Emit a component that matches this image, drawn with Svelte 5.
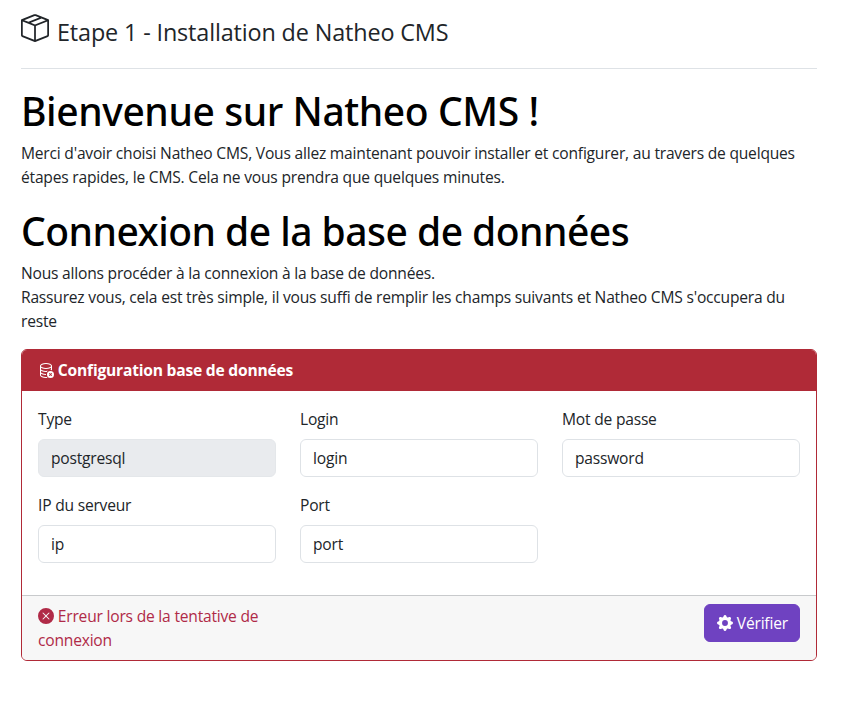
<script>
  const fields = [
    { id: 'type', label: 'Type', value: 'postgresql', disabled: true },
    { id: 'login', label: 'Login', value: 'login' },
    { id: 'password', label: 'Mot de passe', value: 'password' },
    { id: 'ip', label: 'IP du serveur', value: 'ip' },
    { id: 'port', label: 'Port', value: 'port' },
  ];
</script>

<main>
  <header class="title">
    <svg class="box" viewBox="0 0 16 16" fill="currentColor"><path d="M8.186 1.113a.5.5 0 0 0-.372 0L1.846 3.5l2.404.961L10.404 2zm3.564 1.426L5.596 5 8 5.961 14.154 3.5zm3.25 1.7-6.5 2.6v7.922l6.5-2.6V4.24zM7.5 14.762V6.838L1 4.239v7.923zM7.443.184a1.5 1.5 0 0 1 1.114 0l7.129 2.852A.5.5 0 0 1 16 3.5v8.662a1 1 0 0 1-.629.928l-7.185 2.874a.5.5 0 0 1-.372 0L.63 13.09a1 1 0 0 1-.63-.928V3.5a.5.5 0 0 1 .314-.464z" /></svg>
    <span>Etape 1 - Installation de Natheo CMS</span>
  </header>

  <h1>Bienvenue sur Natheo CMS !</h1>
  <p>Merci d'avoir choisi Natheo CMS, Vous allez maintenant pouvoir installer et configurer, au travers de quelques<br />étapes rapides, le CMS. Cela ne vous prendra que quelques minutes.</p>

  <h1 class="tight">Connexion de la base de données</h1>
  <p>Nous allons procéder à la connexion à la base de données.<br />Rassurez vous, cela est très simple, il vous suffi de remplir les champs suivants et Natheo CMS s'occupera du<br />reste</p>

  <section class="card">
    <div class="card-header">
      <svg viewBox="0 0 16 16" fill="currentColor"><path d="M12.096 6.223A5 5 0 0 0 13 5.698V7c0 .289-.213.654-.753 1.007a4.5 4.5 0 0 1 1.753.25V4c0-1.007-.875-1.755-1.904-2.223C11.022 1.289 9.573 1 8 1s-3.022.289-4.096.777C2.875 2.245 2 2.993 2 4v9c0 1.007.875 1.755 1.904 2.223C4.978 15.71 6.427 16 8 16c.536 0 1.058-.034 1.555-.097a4.5 4.5 0 0 1-.813-.927Q8.378 15 8 15c-1.464 0-2.766-.27-3.682-.687C3.356 13.875 3 13.373 3 13v-1.302c.271.202.58.378.904.525C4.978 12.71 6.427 13 8 13h.027a4.6 4.6 0 0 1 0-1H8c-1.464 0-2.766-.27-3.682-.687C3.356 10.875 3 10.373 3 10V8.698c.271.202.58.378.904.525C4.978 9.71 6.427 10 8 10q.393 0 .774-.024a4.5 4.5 0 0 1 1.102-1.132C9.298 8.944 8.666 9 8 9c-1.464 0-2.766-.27-3.682-.687C3.356 7.875 3 7.373 3 7V5.698c.271.202.58.378.904.525C4.978 6.711 6.427 7 8 7s3.022-.289 4.096-.777M3 4c0-.374.356-.875 1.318-1.313C5.234 2.271 6.536 2 8 2s2.766.27 3.682.687C12.644 3.125 13 3.627 13 4c0 .374-.356.875-1.318 1.313C10.766 5.729 9.464 6 8 6s-2.766-.27-3.682-.687C3.356 4.875 3 4.373 3 4" /><path d="M12.5 16a3.5 3.5 0 1 0 0-7 3.5 3.5 0 0 0 0 7m-.646-4.854.646.647.646-.647a.5.5 0 0 1 .708.708l-.647.646.647.646a.5.5 0 0 1-.708.708l-.646-.647-.646.647a.5.5 0 0 1-.708-.708l.647-.646-.647-.646a.5.5 0 0 1 .708-.708" /></svg>
      Configuration base de données
    </div>
    <div class="card-body">
      {#each fields as field (field.id)}
        <div class="field">
          <label for={field.id}>{field.label}</label>
          <input id={field.id} type="text" value={field.value} disabled={field.disabled} />
        </div>
      {/each}
    </div>
    <div class="card-footer">
      <div class="error">
        <svg viewBox="0 0 16 16" fill="currentColor"><path d="M16 8A8 8 0 1 1 0 8a8 8 0 0 1 16 0M5.354 4.646a.5.5 0 1 0-.708.708L7.293 8l-2.647 2.646a.5.5 0 0 0 .708.708L8 8.707l2.646 2.647a.5.5 0 0 0 .708-.708L8.707 8l2.647-2.646a.5.5 0 0 0-.708-.708L8 7.293z" /></svg>
        Erreur lors de la tentative de connexion
      </div>
      <button type="button">
        <svg viewBox="0 0 16 16" fill="currentColor"><path d="M9.405 1.05c-.413-1.4-2.397-1.4-2.81 0l-.1.34a1.464 1.464 0 0 1-2.105.872l-.31-.17c-1.283-.698-2.686.705-1.987 1.987l.169.311c.446.82.023 1.841-.872 2.105l-.34.1c-1.4.413-1.4 2.397 0 2.81l.34.1a1.464 1.464 0 0 1 .872 2.105l-.17.31c-.698 1.283.705 2.686 1.987 1.987l.311-.169a1.464 1.464 0 0 1 2.105.872l.1.34c.413 1.4 2.397 1.4 2.81 0l.1-.34a1.464 1.464 0 0 1 2.105-.872l.31.17c1.283.698 2.686-.705 1.987-1.987l-.169-.311a1.464 1.464 0 0 1 .872-2.105l.34-.1c1.4-.413 1.4-2.397 0-2.81l-.34-.1a1.464 1.464 0 0 1-.872-2.105l.17-.31c.698-1.283-.705-2.686-1.987-1.987l-.311.169a1.464 1.464 0 0 1-2.105-.872zM8 10.93a2.929 2.929 0 1 1 0-5.86 2.929 2.929 0 0 1 0 5.858z" /></svg>
        Vérifier
      </button>
    </div>
  </section>
</main>

<style>
  :global(body) {
    background: #fff;
  }

  * {
    box-sizing: border-box;
  }

  main {
    width: 861px;
    height: 703px;
    padding: 0 44px 0 21px;
    overflow: hidden;
    color: #212529;
    font: 400 15.6px/24px "Open Sans", "Segoe UI", sans-serif;
    letter-spacing: -0.21px;
  }

  svg {
    display: inline-block;
    width: 16px;
    height: 16px;
    flex: none;
    vertical-align: -2px;
  }

  .title {
    display: flex;
    gap: 8px;
    height: 69px;
    padding-top: 14px;
    border-bottom: 1px solid #dee2e6;
    font-size: 23.4px;
    line-height: 36px;
    letter-spacing: -0.14px;
  }

  .title .box {
    width: 28px;
    height: 28px;
  }

  h1 {
    height: 48px;
    margin: 0 0 7px;
    color: #000;
    font: 500 39px/50px "Noto Sans", "Segoe UI", sans-serif;
    letter-spacing: -0.41px;
  }

  .title + h1 {
    margin-top: 17px;
  }

  h1.tight {
    letter-spacing: -0.52px;
  }

  p {
    margin: 0 0 17px;
    white-space: nowrap;
  }

  .card {
    margin-top: -1px;
    height: 312px;
    display: flex;
    flex-direction: column;
    border: 1px solid #b02a37;
    border-radius: 6px;
    overflow: hidden;
  }

  .card-header {
    height: 41px;
    padding: 8px 16px;
    background: #b02a37;
    color: #fff;
    font-weight: 700;
  }

  .card-body {
    flex: 1;
    display: grid;
    grid-template-columns: repeat(3, 238px);
    grid-auto-rows: 70px;
    gap: 16px 24px;
    padding: 16px;
  }

  label {
    display: block;
    margin-bottom: 8px;
  }

  input {
    display: block;
    width: 100%;
    height: 38px;
    padding: 6px 12px;
    border: 1px solid #dee2e6;
    border-radius: 6px;
    background: #fff;
    color: #212529;
    font: inherit;
    letter-spacing: inherit;
  }

  input:disabled {
    background: #e9ebee;
    border-color: #e4e7ea;
  }

  .card-footer {
    display: flex;
    justify-content: space-between;
    height: 65px;
    padding: 8px 16px;
    border-top: 1px solid #c8cacc;
    background: #f7f7f7;
  }

  .error {
    width: 238px;
    color: #b02a47;
  }

  button {
    width: 96px;
    height: 38px;
    padding: 0 12px;
    border: 1px solid #6f42c1;
    border-radius: 6px;
    background: #6f42c1;
    color: #fff;
    font: inherit;
    letter-spacing: inherit;
    white-space: nowrap;
  }
</style>
